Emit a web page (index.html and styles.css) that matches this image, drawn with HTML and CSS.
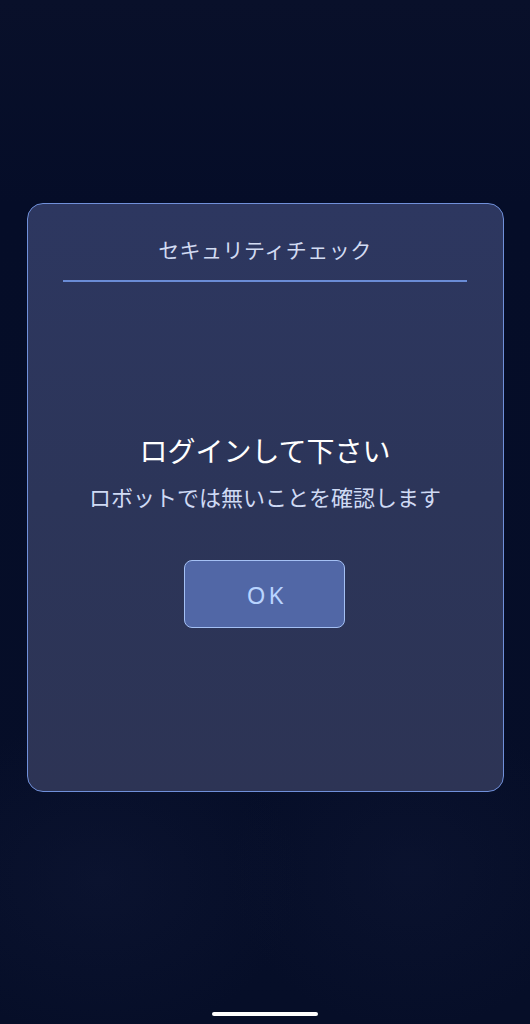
FILE: index.html
```html
<!DOCTYPE html>
<html lang="ja">
<head>
<meta charset="utf-8">
<title>セキュリティチェック</title>
<link rel="stylesheet" href="styles.css">
</head>
<body>
<div class="screen">
  <div class="dialog">
    <div class="dialog-head">
      <h2 class="dialog-title">セキュリティチェック</h2>
      <div class="divider"></div>
    </div>
    <div class="dialog-body">
      <p class="heading">ログインして下さい</p>
      <p class="sub">ロボットでは無いことを確認します</p>
      <button class="ok-btn" type="button">OK</button>
    </div>
  </div>
  <div class="home-bar"></div>
</div>
</body>
</html>
```

FILE: styles.css
```css
* { box-sizing: border-box; }

html, body {
  margin: 0;
  padding: 0;
  width: 530px;
  height: 1024px;
  overflow: hidden;
  background: #070f28;
  font-family: "Noto Sans CJK JP", "Noto Sans", sans-serif;
}

.screen {
  width: 530px;
  height: 1024px;
  display: flex;
  flex-direction: column;
  align-items: center;
  padding-top: 203px;
  background:
    radial-gradient(ellipse 200px 160px at 100px 880px, rgba(20, 28, 60, 0.35), transparent),
    radial-gradient(ellipse 180px 160px at 410px 870px, rgba(20, 28, 60, 0.3), transparent),
    linear-gradient(180deg, #09102a 0%, #050d28 20%, #060e28 100%);
}

.dialog {
  width: 477px;
  height: 589px;
  border: 1.5px solid #7090da;
  border-radius: 16px;
  background: linear-gradient(180deg, #2d3760 0%, #2c3559 50%, #2d3455 100%);
  display: flex;
  flex-direction: column;
  align-items: center;
}

.dialog-head {
  width: 100%;
  display: flex;
  flex-direction: column;
  align-items: center;
  padding-top: 30px;
}

.dialog-title {
  margin: 0;
  font-size: 21px;
  font-weight: 400;
  line-height: 30px;
  color: #d2dbf2;
  letter-spacing: 0.5px;
}

.divider {
  margin-top: 16px;
  width: 404px;
  height: 2px;
  background: #6a8cd6;
}

.dialog-body {
  display: flex;
  flex-direction: column;
  align-items: center;
  padding-top: 150px;
}

.heading {
  margin: 0;
  font-size: 28px;
  line-height: 36px;
  font-weight: 400;
  color: #ffffff;
}

.sub {
  margin: 13px 0 0;
  font-size: 22px;
  line-height: 30px;
  font-weight: 400;
  color: #cfdaf4;
}

.ok-btn {
  margin-top: 49px;
  width: 161px;
  height: 68px;
  border: 1.5px solid #a4c0f4;
  border-radius: 8px;
  background: #5167a6;
  color: #b9d4ff;
  font-family: "Noto Sans", "DejaVu Sans", sans-serif;
  font-size: 24px;
  letter-spacing: 3px;
  padding: 0 0 0 3px;
}

.home-bar {
  margin-top: auto;
  margin-bottom: 8px;
  width: 106px;
  height: 4px;
  border-radius: 2px;
  background: #ffffff;
}
```
